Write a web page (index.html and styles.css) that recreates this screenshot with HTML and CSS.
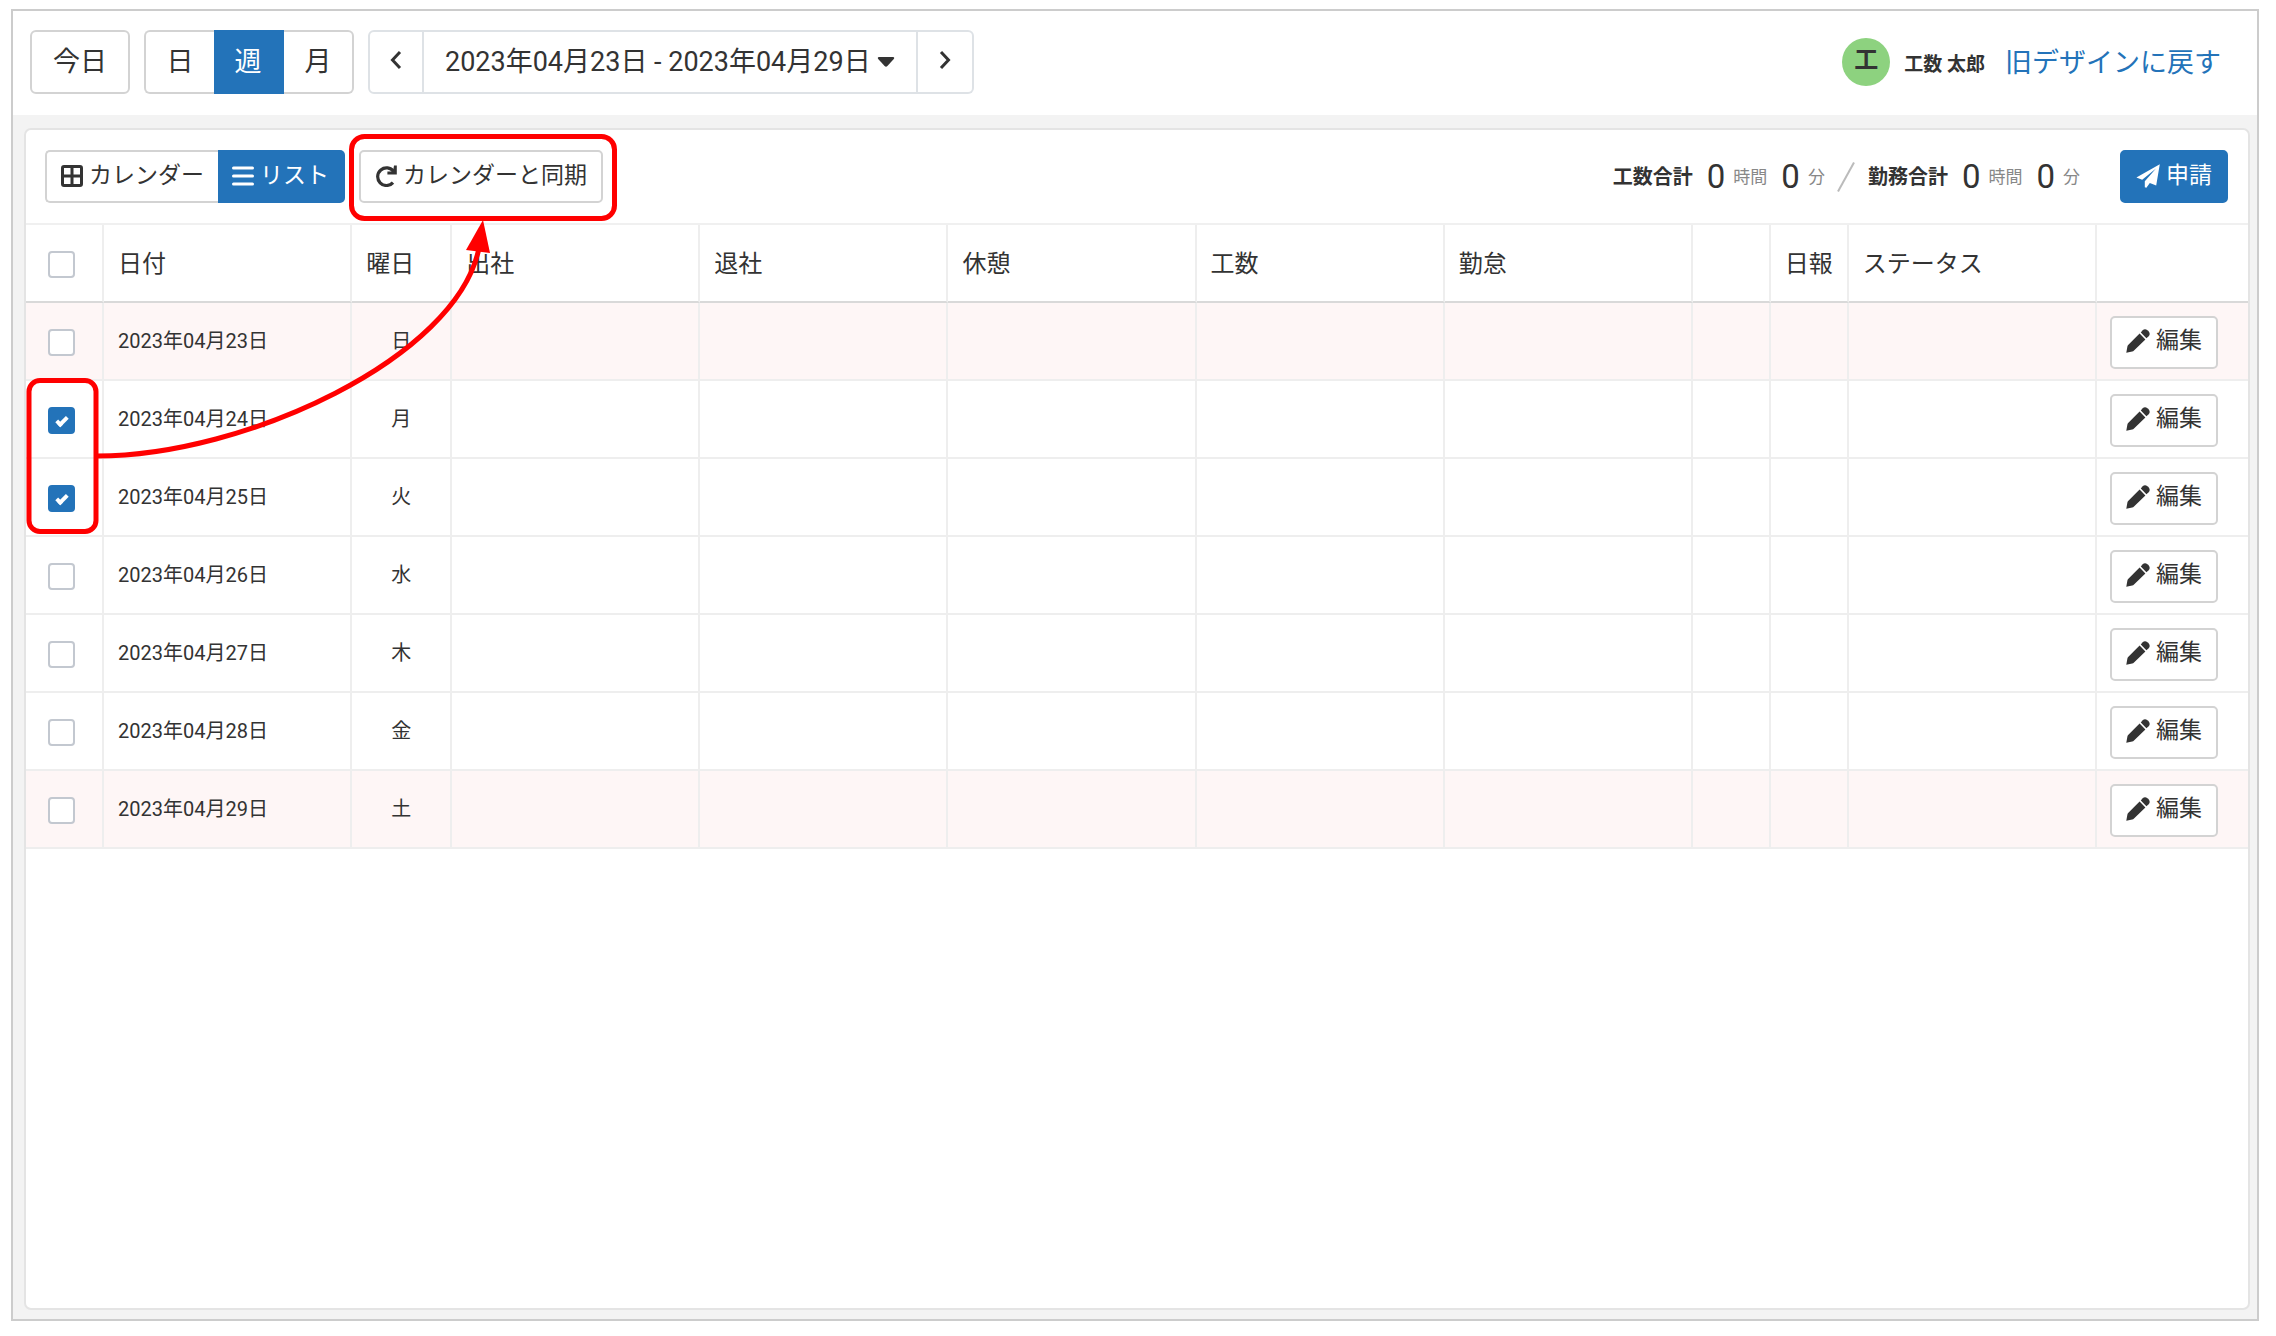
FILE: index.html
```html
<!DOCTYPE html>
<html lang="ja">
<head>
  <meta charset="UTF-8">
  <meta name="viewport" content="width=device-width, initial-scale=1.0">
  <title>工数管理</title>
  <link rel="stylesheet" href="styles.css">
</head>
<body>
  <svg class="icon-defs" aria-hidden="true">
    <symbol id="pencil" viewBox="0 0 24 24">
      <path d="M0.3 23.7 L1.4 17.6 Q1.6 16.6 2.4 15.8 L13.6 4.6 L19.4 10.4 L8 21.6 Q7.2 22.4 6.2 22.6 Z"/>
      <path d="M14.8 3.6 L16.4 1.6 Q18.8 -0.8 21.4 1.2 L22.8 2.6 Q24.8 5.2 22.4 7.6 L20.4 9.2 Z"/>
    </symbol>
  </svg>

  <div class="frame">
    <header class="navbar">
      <button class="button large">今日</button>
      <div class="group">
        <button class="button large range">日</button>
        <button class="button large range active">週</button>
        <button class="button large range">月</button>
      </div>
      <div class="group period">
        <button class="button large arrow" aria-label="前の週">
          <svg width="12" height="20" viewBox="0 0 12 20"><path d="M10 2 L2.5 10 L10 18"/></svg>
        </button>
        <button class="button large dates">2023年04月23日 - 2023年04月29日
          <svg width="18" height="12" viewBox="0 0 18 12"><path d="M2 1 H16 Q18 1.4 16.8 3 L10.4 10 Q9 11.4 7.6 10 L1.2 3 Q0 1.4 2 1 Z"/></svg>
        </button>
        <button class="button large arrow" aria-label="次の週">
          <svg width="12" height="20" viewBox="0 0 12 20"><path d="M2 2 L9.5 10 L2 18"/></svg>
        </button>
      </div>
      <div class="user">
        <span class="avatar">工</span>
        <span class="user-name">工数 太郎</span>
        <a href="#" class="old-design">旧デザインに戻す</a>
      </div>
    </header>

    <main class="box">
      <div class="toolbar">
        <div class="group">
          <button class="button">
            <svg width="22" height="22" viewBox="0 0 22 22"><path d="M3 1.5 H19 Q20.5 1.5 20.5 3 V19 Q20.5 20.5 19 20.5 H3 Q1.5 20.5 1.5 19 V3 Q1.5 1.5 3 1.5 Z M11 1.5 V20.5 M1.5 11 H20.5" fill="none" stroke="currentColor" stroke-width="3"/></svg>
            カレンダー
          </button>
          <button class="button active">
            <svg width="22" height="22" viewBox="0 0 22 22"><path d="M1.5 3 H20.5 M1.5 11 H20.5 M1.5 19 H20.5" fill="none" stroke="currentColor" stroke-width="3" stroke-linecap="round"/></svg>
            リスト
          </button>
        </div>
        <button class="button">
          <svg width="22" height="22" viewBox="0 0 22 22"><path d="M18.6 6.5 A8.8 8.8 0 1 0 18 17.6" fill="none" stroke="currentColor" stroke-width="3.2"/><path d="M19 0.5 H21.8 V9.6 H12.4 V6.6 H18 Z"/></svg>
          カレンダーと同期
        </button>
        <div class="totals">
          <b>工数合計</b>
          <span class="num">0</span><span class="unit">時間</span>
          <span class="num">0</span><span class="unit">分</span>
          <svg class="slash" width="18" height="30" viewBox="0 0 18 30"><path d="M1 29.5 L17 0.5"/></svg>
          <b>勤務合計</b>
          <span class="num">0</span><span class="unit">時間</span>
          <span class="num">0</span><span class="unit">分</span>
        </div>
        <button class="button active">
          <svg width="24" height="24" viewBox="0 0 24 24"><path d="M23.8 0.2 L20.2 21.6 L13.8 19 L10.4 23.8 L8.8 23.2 V17.2 L20 4.4 L6.2 15.8 L0.4 13.4 Z"/></svg>
          申請
        </button>
      </div>

      <table>
        <colgroup>
          <col class="col-small"><col><col class="col-day">
          <col><col><col><col><col>
          <col class="col-small"><col class="col-small"><col><col class="col-edit">
        </colgroup>
        <thead>
          <tr>
            <th><input type="checkbox" aria-label="すべて選択"></th>
            <th>日付</th><th>曜日</th><th>出社</th><th>退社</th><th>休憩</th><th>工数</th><th>勤怠</th><th></th><th>日報</th><th>ステータス</th><th></th>
          </tr>
        </thead>
        <tbody>
          <tr class="holiday">
            <td><input type="checkbox" aria-label="2023年04月23日"></td>
            <td>2023年04月23日</td><td class="day">日</td>
            <td></td><td></td><td></td><td></td><td></td><td></td><td></td><td></td>
            <td><button class="button"><svg width="24" height="24"><use href="#pencil"/></svg>編集</button></td>
          </tr>
          <tr>
            <td><input type="checkbox" aria-label="2023年04月24日" checked></td>
            <td>2023年04月24日</td><td class="day">月</td>
            <td></td><td></td><td></td><td></td><td></td><td></td><td></td><td></td>
            <td><button class="button"><svg width="24" height="24"><use href="#pencil"/></svg>編集</button></td>
          </tr>
          <tr>
            <td><input type="checkbox" aria-label="2023年04月25日" checked></td>
            <td>2023年04月25日</td><td class="day">火</td>
            <td></td><td></td><td></td><td></td><td></td><td></td><td></td><td></td>
            <td><button class="button"><svg width="24" height="24"><use href="#pencil"/></svg>編集</button></td>
          </tr>
          <tr>
            <td><input type="checkbox" aria-label="2023年04月26日"></td>
            <td>2023年04月26日</td><td class="day">水</td>
            <td></td><td></td><td></td><td></td><td></td><td></td><td></td><td></td>
            <td><button class="button"><svg width="24" height="24"><use href="#pencil"/></svg>編集</button></td>
          </tr>
          <tr>
            <td><input type="checkbox" aria-label="2023年04月27日"></td>
            <td>2023年04月27日</td><td class="day">木</td>
            <td></td><td></td><td></td><td></td><td></td><td></td><td></td><td></td>
            <td><button class="button"><svg width="24" height="24"><use href="#pencil"/></svg>編集</button></td>
          </tr>
          <tr>
            <td><input type="checkbox" aria-label="2023年04月28日"></td>
            <td>2023年04月28日</td><td class="day">金</td>
            <td></td><td></td><td></td><td></td><td></td><td></td><td></td><td></td>
            <td><button class="button"><svg width="24" height="24"><use href="#pencil"/></svg>編集</button></td>
          </tr>
          <tr class="holiday">
            <td><input type="checkbox" aria-label="2023年04月29日"></td>
            <td>2023年04月29日</td><td class="day">土</td>
            <td></td><td></td><td></td><td></td><td></td><td></td><td></td><td></td>
            <td><button class="button"><svg width="24" height="24"><use href="#pencil"/></svg>編集</button></td>
          </tr>
        </tbody>
      </table>
    </main>
  </div>

  <!-- guide: checked rows -> sync button -->
  <svg class="guide" width="640" height="560" viewBox="0 0 640 560" aria-hidden="true">
    <rect x="351.5" y="136.5" width="263" height="82" rx="13"/>
    <rect x="29" y="380.5" width="67" height="151" rx="11"/>
    <path d="M97 456 C245 456 457 358 479 248"/>
    <path class="guide-head" d="M483 220 L466 250 L490 253 Z"/>
  </svg>
</body>
</html>
```

FILE: styles.css
```css
* {
  box-sizing: border-box;
}
body {
  margin: 0;
  min-height: 100vh;
  padding: 9px 17px 15px 11px;
  display: flex;
  background: #fff;
  color: #333;
  font-family: Roboto, "Noto Sans CJK JP", sans-serif;
  font-size: 24px;
}
.icon-defs {
  position: absolute;
  width: 0;
  height: 0;
}
.frame {
  flex: 1;
  display: flex;
  flex-direction: column;
  border: 2px solid #ccc;
  background: #f3f3f3;
}

/* header */
.navbar {
  display: flex;
  align-items: center;
  gap: 14px;
  height: 104px;
  padding: 0 36px 2px 17px;
  background: #fff;
}
.button {
  display: flex;
  align-items: center;
  gap: 6px;
  height: 53px;
  padding: 0 14px 2px;
  border: 2px solid #d3d3d3;
  border-radius: 5px;
  background: #fff;
  color: #333;
  font-family: inherit;
  font-size: 23px;
  line-height: 32px;
  white-space: nowrap;
  cursor: pointer;
}
.button svg {
  fill: currentColor;
}
.button.active {
  border-color: #2373b9;
  background: #2373b9;
  color: #fff;
}
.large {
  justify-content: center;
  height: 64px;
  padding: 0 21px;
  border-radius: 6px;
  font-size: 27px;
}
.group {
  display: flex;
}
.group .button:not(:first-child) {
  border-left: 0;
  border-top-left-radius: 0;
  border-bottom-left-radius: 0;
}
.group .button:not(:last-child) {
  border-top-right-radius: 0;
  border-bottom-right-radius: 0;
}
.group .button:has(+ .active) {
  border-right: 0;
}
.navbar .range {
  width: 70px;
}
.period .button {
  border-color: #dee2e6;
}
.navbar .arrow {
  width: 56px;
  padding: 0 0 4px;
}
.arrow svg {
  fill: none;
  stroke: currentColor;
  stroke-width: 3;
}
.user {
  display: flex;
  align-items: center;
  margin-left: auto;
}
.avatar {
  width: 48px;
  height: 48px;
  margin-right: 14px;
  border-radius: 50%;
  background: #8dd27f;
  font-weight: bold;
  line-height: 44px;
  text-align: center;
}
.user-name {
  margin-right: 20px;
  font-size: 19px;
  font-weight: bold;
}
.old-design {
  padding-bottom: 4px;
  color: #2373b9;
  font-size: 27px;
  text-decoration: none;
}

/* list panel */
.box {
  flex: 1;
  margin: 13px 7px 9px 11px;
  border: 2px solid #e4e4e4;
  border-radius: 7px;
  background: #fff;
}
.toolbar {
  display: flex;
  align-items: center;
  gap: 14px;
  height: 93px;
  padding: 0 20px 0 19px;
}
.totals {
  display: flex;
  align-items: center;
  margin-left: auto;
  margin-right: 26px;
  font-size: 20px;
  line-height: 36px;
}
.num {
  margin: 0 8px 0 14px;
  font-size: 33px;
}
.unit {
  color: #888;
  font-size: 17px;
}
.slash {
  margin: 0 13px 0 12px;
  fill: none;
  stroke: #bbb;
  stroke-width: 2;
}

table {
  width: 100%;
  table-layout: fixed;
  border-collapse: separate;
  border-spacing: 0;
  border-top: 2px solid #f0f0f0;
}
.col-small {
  width: 78px;
}
.col-day {
  width: 100px;
}
.col-edit {
  width: 151px;
}
th, td {
  height: 78px;
  padding: 0 14px 4px;
  border-right: 2px solid #eee;
  border-bottom: 2px solid #eee;
  text-align: left;
  white-space: nowrap;
}
th {
  border-bottom-color: #d9d9d9;
  font-weight: normal;
}
td {
  font-size: 20px;
}
th:last-child, td:last-child {
  padding: 2px 0 0 13px;
  border-right: 0;
}
th:first-child, td:first-child {
  padding: 2px 0 0 22px;
}
.day {
  text-align: center;
}
.holiday {
  background: #fef6f6;
}
input[type="checkbox"] {
  appearance: none;
  display: grid;
  place-items: center;
  width: 27px;
  height: 27px;
  margin: 0;
  border: 2px solid #c3c8d0;
  border-radius: 4px;
  background: #fff;
}
input[type="checkbox"]:checked {
  border-color: #2373b9;
  background: #2373b9;
}
input[type="checkbox"]:checked::after {
  content: "";
  width: 8px;
  height: 3px;
  border: solid #fff;
  border-width: 0 0 4px 4px;
  transform: rotate(-45deg);
}

.guide {
  position: absolute;
  top: 0;
  left: 0;
  fill: none;
  stroke: #f00;
  stroke-width: 5;
  pointer-events: none;
}
.guide-head {
  fill: #f00;
  stroke: none;
}
```
